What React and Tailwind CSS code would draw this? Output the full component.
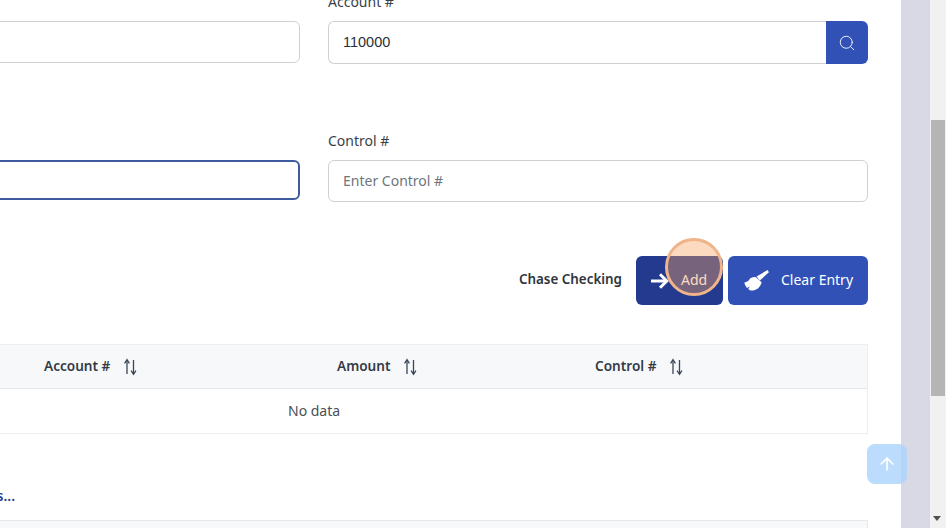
import React from "react";
import { ArrowUp, Search } from "lucide-react";

const font = "font-['Noto_Sans','Open_Sans',sans-serif]";

function SortIcon() {
  return (
    <svg width="15" height="18" viewBox="0 0 15 18" fill="none" stroke="#3b4658" strokeWidth="1.3" className="ml-[13px] mt-[1px] shrink-0">
      <path d="M4 16V2" />
      <path d="M1.6 5.4 4 1.6l2.4 3.8" />
      <path d="M10.5 2v14" />
      <path d="M8.1 12.6l2.4 3.8 2.4-3.8" />
    </svg>
  );
}

function Broom() {
  return (
    <svg width="25" height="21" viewBox="0 0 25 21" fill="#fff" className="shrink-0">
      <path d="M23.6 0 12.6 6.6l3.2 4L24.9 2.2z" />
      <path d="M12 7.2c-3-.5-5.6.6-6.8 2.6-1 1.6-2.4 2.4-4.8 2.6.2 1.6.8 3 1.6 4.2.3.5.6.9 1 1.4l3-1.4-1.8 2.4c.7.6 1.4 1.1 2.2 1.5 5.2.5 9.8-2.2 11.2-8.2z" />
    </svg>
  );
}

function BoldArrow() {
  return (
    <svg width="18" height="16" viewBox="0 0 18 16" fill="none" stroke="#fff" strokeWidth="3" className="shrink-0">
      <path d="M0 8h15.5" />
      <path d="M9 1.2 15.8 8 9 14.8" />
    </svg>
  );
}

export default function App() {
  return (
    <div className={`relative flex h-[528px] w-[946px] overflow-hidden bg-white ${font}`}>
      <main className="relative w-[901px] shrink-0 overflow-hidden">
        <div className="ml-[-242px] mt-[-9px] w-[1110px]">
          <div className="grid grid-cols-[542px_540px] gap-x-[28px]">
            <div className="flex flex-col">
              <div className="h-[21px]" />
              <div className="mt-[9px] h-[42px] rounded-md border border-[#cfd1d4] bg-white" />
            </div>
            <div className="flex flex-col">
              <label className="h-[21px] text-[14px] leading-[21px] text-[#3a3f47]">Account #</label>
              <div className="mt-[9px] flex h-[43px]">
                <div className="flex flex-1 items-center rounded-l-md border border-r-0 border-[#cfd1d4] pl-[14px] pt-[1px] font-['Liberation_Sans',sans-serif] text-[14.5px] text-[#2b2f36]">
                  110000
                </div>
                <div className="flex w-[42px] items-center justify-center rounded-r-md bg-[#3151b7]">
                  <Search size={18} color="#fff" strokeWidth={1.2} />
                </div>
              </div>
            </div>
          </div>

          <div className="mt-[66px] grid grid-cols-[542px_540px] gap-x-[28px]">
            <div className="flex flex-col">
              <div className="h-[21px]" />
              <div className="mt-[9px] h-[40px] rounded-md border-2 border-[#3f5a9f] bg-white" />
            </div>
            <div className="flex flex-col">
              <label className="h-[21px] text-[14px] leading-[21px] text-[#3a3f47]">Control #</label>
              <div className="mt-[9px] flex h-[42px] items-center rounded-md border border-[#cfd1d4] pb-[2px] pl-[14px] text-[14px] text-[#70757c]">
                Enter Control #
              </div>
            </div>
          </div>

          <div className="mt-[54px] flex items-center justify-end">
            <span className="mb-[2px] mr-[14px] text-[13.4px] font-semibold text-[#2f343b]">Chase Checking</span>
            <button className="flex h-[49px] w-[87px] items-center rounded-md bg-[#233a8e] pl-[15px] text-[14px] text-white">
              <BoldArrow />
              <span className="mb-[2px] ml-[12px]">Add</span>
            </button>
            <button className="ml-[5px] flex h-[49px] w-[140px] items-center rounded-md bg-[#3151b7] pl-[16px] text-[14px] text-white">
              <Broom />
              <span className="mb-[2px] ml-[12px]">Clear Entry</span>
            </button>
          </div>

          <div className="mt-[39px] border border-l-0 border-[#edeef0]">
            <div className="grid h-[44px] grid-cols-[528px_293px_258px_1fr] items-center border-b border-[#e6e8eb] bg-[#f7f8fa] text-[13.6px] font-semibold text-[#343a46]">
              <div className="flex items-center justify-end">
                <span className="flex w-[242px] items-center">
                  <span className="mb-[1px]">Account #</span>
                  <SortIcon />
                </span>
              </div>
              <div className="flex items-center pl-[51px]">
                <span className="mb-[1px]">Amount</span>
                <SortIcon />
              </div>
              <div className="flex items-center pl-[16px]">
                <span className="mb-[1px]">Control #</span>
                <SortIcon />
              </div>
              <div />
            </div>
            <div className="h-[44px] pl-[530px] text-[14px] leading-[44px] text-[#4a4f57]">No data</div>
          </div>

          <div className="flex h-[86px] items-center justify-start">
            <span className="mt-[36px] w-[257px] text-right text-[14px] font-semibold text-[#2b3f8f]">Details...</span>
          </div>

          <div className="h-[20px] border border-b-0 border-l-0 border-[#e6e8eb] bg-[#f7f8fa]" />
        </div>

        <div className="absolute left-[665px] top-[238px] h-[58px] w-[58px] rounded-full border-[3px] border-[#f0b48a] bg-[#f8a361]/40" />
      </main>

      <div className="w-[29px] shrink-0 bg-[#d9d9e6]" />

      <div className="relative w-[16px] shrink-0 bg-[#f1f1f1]">
        <div className="absolute left-[1px] top-[120px] h-[276px] w-[14px] bg-[#b5b5b5]" />
        <div className="absolute bottom-[7px] left-[3px] h-0 w-0 border-x-[4px] border-t-[5px] border-x-transparent border-t-[#505050]" />
      </div>

      <div className="absolute left-[867px] top-[444px] flex h-[40px] w-[40px] items-center justify-center rounded-lg bg-[#abd3fc]/80">
        <ArrowUp size={20} color="#fff" strokeWidth={2} />
      </div>
    </div>
  );
}
